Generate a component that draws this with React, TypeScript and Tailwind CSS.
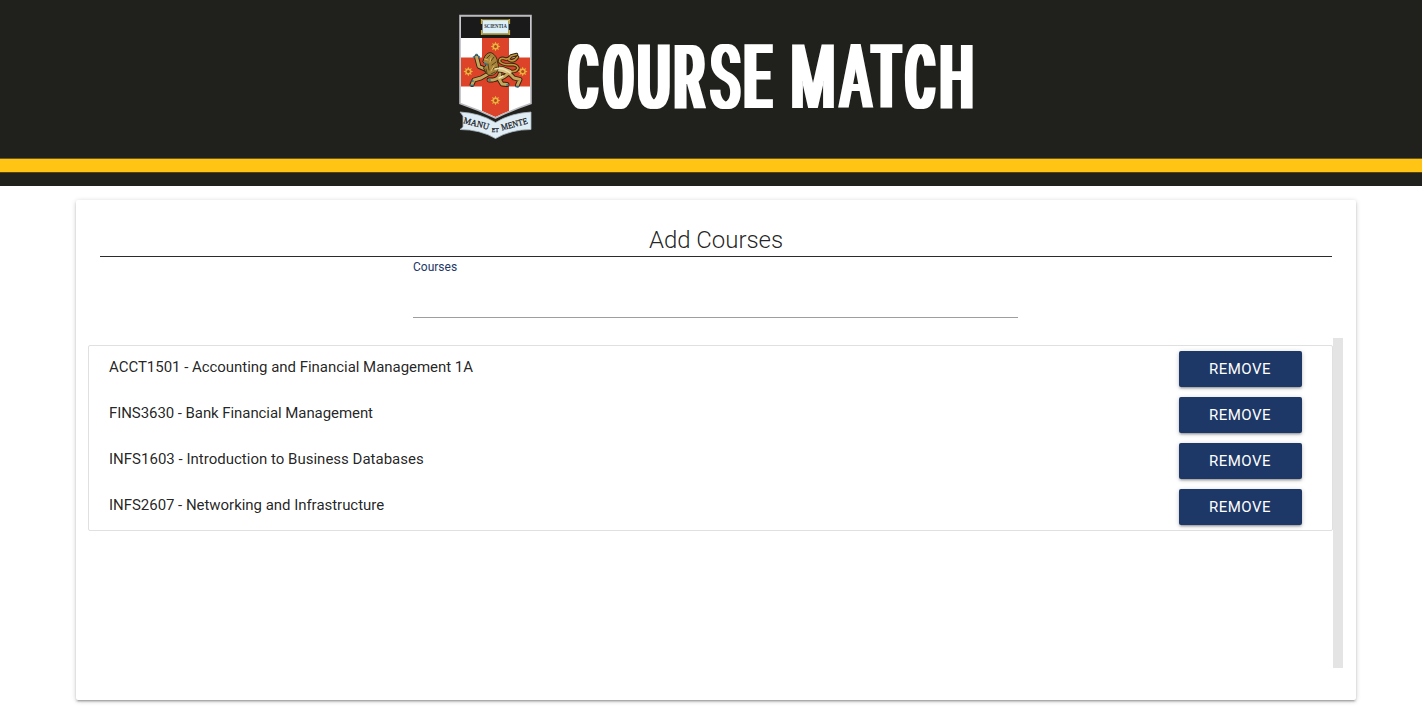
const courses = [
  { name: 'ACCT1501 - Accounting and Financial Management 1A', tracking: 'tracking-[-0.03px]' },
  { name: 'FINS3630 - Bank Financial Management', tracking: 'tracking-[-0.07px]' },
  { name: 'INFS1603 - Introduction to Business Databases', tracking: 'tracking-[0.01px]' },
  { name: 'INFS2607 - Networking and Infrastructure', tracking: 'tracking-[-0.035px]' },
];

const stars = [
  [495.5, 46.5],
  [468.3, 71.5],
  [522.7, 71.5],
  [495.5, 100.5],
];

const glyphs: [string, number, number, number][] = [
  ['C', 568.7, 28.6, 500],
  ['O', 603.8, 29.2, 500],
  ['U', 638.1, 31.7, 500],
  ['R', 674.2, 29.8, 500],
  ['S', 710.9, 28.5, 400],
  ['E', 744.1, 27.2, 500],
  [' ', 775, 14, 500],
  ['M', 791, 44, 400],
  ['A', 840.5, 30.4, 400],
  ['T', 872.3, 28.1, 500],
  ['C', 905.7, 28.6, 500],
  ['H', 940.2, 32.7, 500],
];

function Crest() {
  return (
    <svg viewBox="455 10 82 132" className="h-[132px] w-[82px] shrink-0">
      <defs>
        <clipPath id="shield">
          <path d="M461 16.5H530V103Q512 109 495.5 117Q479 109 461 103Z" />
        </clipPath>
      </defs>
      <path d="M460 15.5H531V103.5Q512 110 495.5 118Q479 110 460 103.5Z" fill="#fff" />
      <g clipPath="url(#shield)">
        <rect x="460" y="15" width="72" height="23" fill="#1b1a1b" />
        <rect x="482" y="38" width="27" height="82" fill="#dd4328" />
        <rect x="460" y="57.5" width="72" height="29" fill="#dd4328" />
      </g>
      <path d="M460 15.5H531V103.5Q512 110 495.5 118Q479 110 460 103.5Z" fill="none" stroke="#b9bbc0" strokeWidth="1.6" />
      <path d="M481 20.2H510M481 34H510M481.6 19v5M481.6 30v5M509.4 19v5M509.4 30v5" stroke="#c8ad35" strokeWidth="1.4" />
      <rect x="482.5" y="20.3" width="26" height="13" fill="#dff1f8" />
      <text x="495.5" y="28.3" textAnchor="middle" textLength="22.5" lengthAdjust="spacingAndGlyphs" fontSize="5.6" fontWeight="700" fill="#26303a" fontFamily="Liberation Serif, serif">SCIENTIA</text>
      {stars.map(([x, y]) => (
        <g key={`${x}-${y}`} transform={`translate(${x} ${y})`}>
          <path d="M0-4.8 1.2-2.4 3.5-3.5 2.5-1.2 4.8 0 2.5 1.2 3.5 3.5 1.2 2.4 0 4.8-1.2 2.4-3.5 3.5-2.5 1.2-4.8 0-2.5-1.2-3.5-3.5-1.2-2.4Z" fill="#e9b23f" />
          <circle r="1.5" fill="#b5461c" />
        </g>
      ))}
      <g strokeLinecap="round" strokeLinejoin="round" fill="none">
        <g stroke="#2b2413" strokeWidth="3.4">
          <path d="M510 71.5Q517 72 518 68Q517 64.5 511 64.5Q503 65.5 499.500 61.5Q499.500 57.500 504 58.500Q508 60.500 511 56L516.500 54.500M509 60Q514 62.500 517.500 57" />
          <path d="M493 69Q501 68 509 72" strokeWidth="6.500" />
          <path d="M487 70L479 66.500 476.500 57M488 74L481 78 474 80 472 84.500M500 74Q499 79 493 80L489 80M509 73Q505 77 499 79L502 84 507 84.500M510 74L514 78 520 79.500 517.500 85" strokeWidth="4.800" />
        </g>
        <g stroke="#c5963a" strokeWidth="1.700">
          <path d="M510 71.5Q517 72 518 68Q517 64.5 511 64.5Q503 65.5 499.500 61.5Q499.500 57.500 504 58.500Q508 60.500 511 56L516.500 54.500M509 60Q514 62.500 517.500 57" />
          <path d="M493 69Q501 68 509 72" stroke="#d9c083" strokeWidth="5" />
          <path d="M487 70L479 66.500 476.500 57M488 74L481 78 474 80 472 84.500M500 74Q499 79 493 80L489 80M509 73Q505 77 499 79L502 84 507 84.500M510 74L514 78 520 79.500 517.500 85" stroke="#c7a55b" strokeWidth="3" />
        </g>
        <path d="M485 56Q488 51.500 492 53Q497 56 497.500 62Q500 68 496 73Q491 78 486 73L483.500 68L486 65L483 62Z" fill="#a78439" stroke="#33260f" strokeWidth=".9" />
        <path d="M490 55L487 58M494 57L491 61M496 62L492 65M497 67L493 69M495 72L491 74M488 64L489 70M486 69L487 73" stroke="#4a3818" strokeWidth=".9" />
        <path d="M484.500 59L488 60M491 58L490 62M494 66L491 71" stroke="#dbb95f" strokeWidth="1" />
        <path d="M495 69Q503 67 510 73M503 76L499 78" stroke="#eee0ae" strokeWidth="1.500" />
        <path d="M484.500 63.500L487 64.500M476 54.500h1M473.500 57h1M479 56.500V57.500M471 85.500h2M472 81h1M489 80h1M507 85h1M516 86.500h2" stroke="#2e7190" strokeWidth="1.700" />
      </g>
      <path d="M460 112Q480 113 495.5 122.500Q511 113 531 112V129.500Q511 129.500 495.5 138.5Q480 129.500 460 129.500L463 127V116Z" fill="#e1edf5" stroke="#a8b5bd" strokeWidth=".8" />
      <g fontFamily="Liberation Serif, serif" fill="#161a1e" stroke="#161a1e" strokeWidth=".25">
        <text x="463" y="123" fontSize="9" textLength="26" lengthAdjust="spacingAndGlyphs" transform="rotate(15 463 123)">MANU</text>
        <text x="491.7" y="132.3" fontSize="5.5" textLength="7" lengthAdjust="spacingAndGlyphs">ET</text>
        <text x="502" y="130.5" fontSize="9" textLength="27" lengthAdjust="spacingAndGlyphs" transform="rotate(-15 502 130.5)">MENTE</text>
      </g>
    </svg>
  );
}

function Wordmark() {
  return (
    <svg viewBox="550 11 440 132" className="h-[132px] w-[440px] shrink-0">
      <defs>
        <filter id="widen" x="-5%" y="-5%" width="110%" height="110%">
          <feMorphology operator="dilate" radius="2.5 0.01" />
        </filter>
      </defs>
      <text y="109.2" fontSize="89" fontWeight="500" fill="#fff" fontFamily="Roboto, sans-serif" filter="url(#widen)">
        {glyphs.map(([g, x, w, weight]) => (
          <tspan key={x} x={x} textLength={w} fontWeight={weight} lengthAdjust="spacingAndGlyphs">{g}</tspan>
        ))}
      </text>
    </svg>
  );
}

export default function App() {
  return (
    <div className="h-[715px] overflow-hidden bg-white font-['Roboto',sans-serif] text-[15px] text-black/87">
      <header className="flex h-[186px] flex-col bg-[#20201c]">
        <div className="flex h-[157px] items-start gap-[13px] pt-2.5 pl-[455px]">
          <Crest />
          <Wordmark />
        </div>
        <div className="mt-px h-[15px] border-t border-b border-t-[#6b5a2c] border-b-[#5a4510] bg-[#ffc414]" />
      </header>
      <main className="mt-3.5 ml-[76px] h-[500px] w-[1280px] rounded-[2px] bg-white pt-6 shadow-[0_2px_2px_0_rgba(0,0,0,0.14),0_3px_1px_-2px_rgba(0,0,0,0.12),0_1px_5px_0_rgba(0,0,0,0.2)]">
        <h1 className="mx-6 h-[33px] border-b border-[#2d2a2e] text-center text-[24px] leading-8 font-light tracking-[-0.05px]">Add Courses</h1>
        <div className="ml-[337px] h-[61px] w-[605px] border-b border-[#9e9e9e] pt-[1px] text-[12px] leading-[18px] text-[#1d3766]">Courses</div>
        <div className="mt-5 ml-3 flex h-[330px] w-[1255px]">
          <ul className="mt-[7px] h-[186px] w-[1245px] rounded-[2px] border border-[#e0e0e0]">
            {courses.map(({ name, tracking }) => (
              <li key={name} className="flex h-[46px] items-center justify-between pr-[30px] pl-5">
                <span className={`pb-1 leading-[22px] ${tracking}`}>{name}</span>
                <button className="h-9 w-[123px] rounded-[2px] bg-[#1d3766] pr-px text-center tracking-[0.5px] text-white shadow-[0_2px_2px_0_rgba(0,0,0,0.14),0_3px_1px_-2px_rgba(0,0,0,0.12),0_1px_5px_0_rgba(0,0,0,0.2)]">REMOVE</button>
              </li>
            ))}
          </ul>
          <div className="w-2.5 bg-[#e4e4e4]" />
        </div>
      </main>
    </div>
  );
}
